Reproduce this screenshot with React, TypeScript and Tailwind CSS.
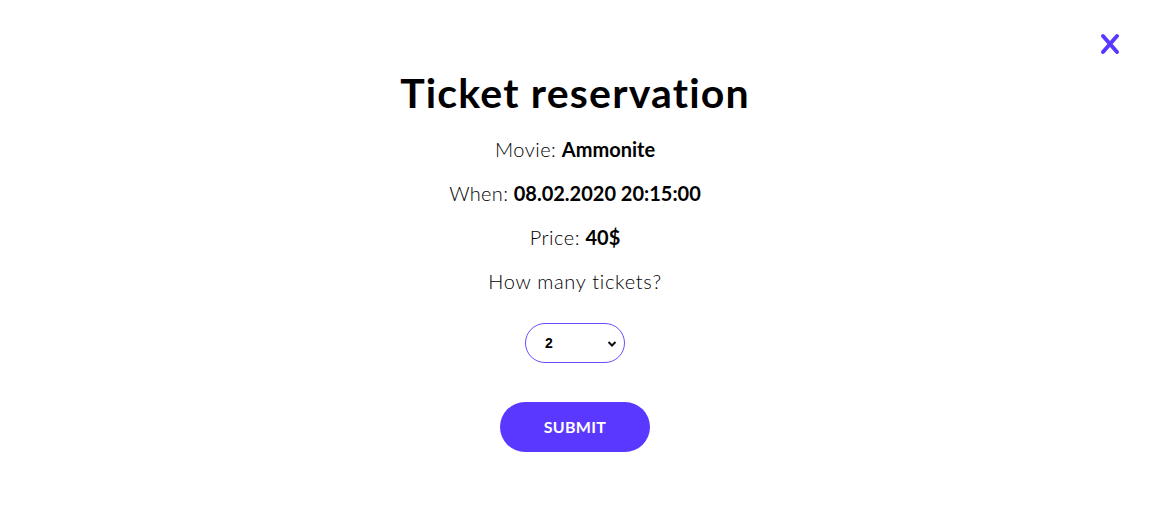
import React from "react";

export default function App() {
  return (
    <div className="relative w-[1150px] h-[524px] bg-white text-black" style={{ fontFamily: "Lato, 'Noto Sans', sans-serif" }}>
      <button className="absolute right-[30px] top-[33px] w-[20px] h-[22px] flex items-center justify-center">
        <svg width="20" height="22" viewBox="0 0 20 22">
          <path d="M3 3 L17 19 M17 3 L3 19" stroke="#5b38ff" strokeWidth="4" strokeLinecap="round" />
        </svg>
      </button>
      <div className="flex flex-col items-center pt-[67px]">
        <h1 className="text-[41px] leading-[52px] font-bold tracking-[1.2px]">Ticket reservation</h1>
        <p className="mt-[16px] text-[20px] leading-[28px] font-light"><span className="tracking-[0.5px]">Movie:</span> <span className="font-bold">Ammonite</span></p>
        <p className="mt-[16px] text-[20px] leading-[28px] font-light"><span className="tracking-[0.3px]">When:</span> <span className="font-bold">08.02.2020 20:15:00</span></p>
        <p className="mt-[16px] text-[20px] leading-[28px] font-light"><span className="tracking-[0.5px]">Price:</span> <span className="font-bold">40$</span></p>
        <p className="mt-[16px] text-[20px] leading-[28px] font-light tracking-[0.7px]">How many tickets?</p>
        <div className="mt-[28px] relative w-[100px] h-[40px] rounded-full border border-[#6c4bff] flex items-center">
          <span className="ml-[19px] text-[14px] font-semibold" style={{ fontFamily: "Arial, 'Liberation Sans', sans-serif" }}>2</span>
          <svg className="absolute right-[7px] top-[16px]" width="10" height="8" viewBox="0 0 10 8">
            <path d="M1.5 2 L5 5.5 L8.5 2" stroke="#111" strokeWidth="2" fill="none" />
          </svg>
        </div>
        <button className="mt-[39px] w-[150px] h-[50px] rounded-full bg-[#5b38ff] text-white text-[16px] font-bold tracking-[0.3px]">SUBMIT</button>
      </div>
    </div>
  );
}
